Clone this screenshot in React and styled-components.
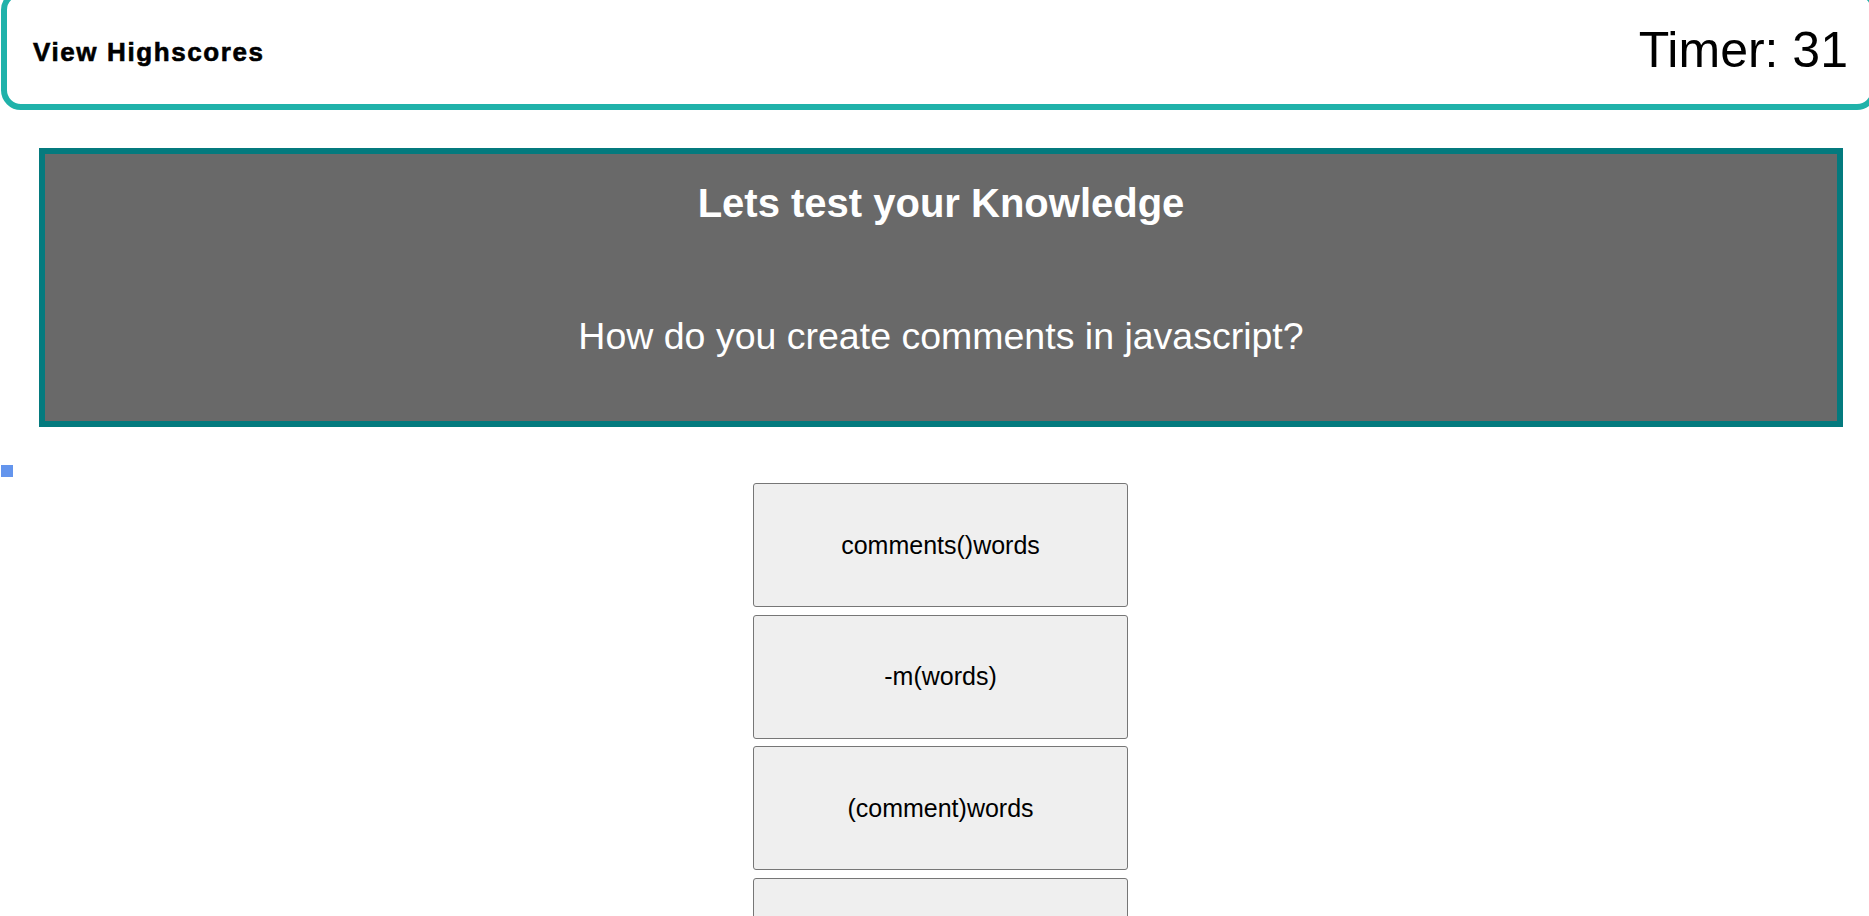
import styled, { createGlobalStyle } from "styled-components";

const GlobalStyle = createGlobalStyle`
  html, body {
    margin: 0;
    padding: 0;
    overflow: hidden;
    background: #ffffff;
    font-family: "Liberation Sans", Arial, sans-serif;
  }
`;

const Page = styled.div`
  width: 1881px;
  display: flex;
  flex-direction: column;
`;

const Header = styled.header`
  box-sizing: border-box;
  height: 120px;
  margin: -10px 4px 0 1px;
  padding: 0 23px 0 26px;
  border: 6px solid #20b2aa;
  border-radius: 20px;
  display: flex;
  align-items: center;
  justify-content: space-between;
`;

const HighscoresLink = styled.a`
  font-size: 26px;
  font-weight: 900;
  letter-spacing: 1.6px;
  -webkit-text-stroke: 0.6px #000;
  color: #000;
  text-decoration: none;
  cursor: pointer;
  margin-top: 4px;
`;

const Timer = styled.div`
  font-size: 50px;
  color: #000;
`;

const QuizPanel = styled.section`
  box-sizing: border-box;
  margin: 38px 38px 0 39px;
  height: 279px;
  border: 6px solid #047a7e;
  background: #696969;
  color: #fff;
  display: flex;
  flex-direction: column;
  align-items: center;
`;

const Title = styled.h1`
  margin: 27px 0 0;
  font-size: 40px;
  font-weight: bold;
`;

const Question = styled.p`
  margin: 89px 0 0;
  font-size: 37.5px;
`;

const Feedback = styled.div`
  width: 12px;
  height: 12px;
  margin: 38px 0 0 1px;
  background: #6495ed;
`;

const Choices = styled.div`
  margin-top: 6px;
  display: flex;
  flex-direction: column;
  align-items: center;
  gap: 7.5px;
`;

const Choice = styled.button`
  box-sizing: border-box;
  width: 375px;
  height: 124px;
  border: 1px solid #767676;
  border-radius: 3px;
  background: #efefef;
  color: #000;
  font-family: "Liberation Sans", Arial, sans-serif;
  font-size: 25px;
  cursor: pointer;
`;

const choices = ["comments()words", "-m(words)", "(comment)words", "//words"];

export default function App() {
  return (
    <Page>
      <GlobalStyle />
      <Header>
        <HighscoresLink>View Highscores</HighscoresLink>
        <Timer>Timer: 31</Timer>
      </Header>
      <QuizPanel>
        <Title>Lets test your Knowledge</Title>
        <Question>How do you create comments in javascript?</Question>
      </QuizPanel>
      <Feedback />
      <Choices>
        {choices.map((c) => (
          <Choice key={c}>{c}</Choice>
        ))}
      </Choices>
    </Page>
  );
}
